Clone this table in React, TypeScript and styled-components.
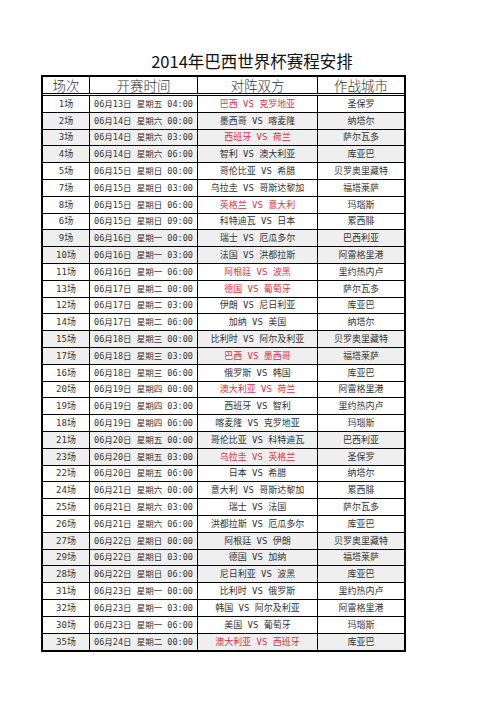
import React from "react";
import styled, { createGlobalStyle } from "styled-components";

const GlobalStyle = createGlobalStyle`
  html, body {
    margin: 0;
    padding: 0;
    background: #ffffff;
  }
  body {
    font-family: "Noto Sans CJK SC", sans-serif;
  }
`;

interface Match {
  no: string;
  date: string;
  week: string;
  time: string;
  home: string;
  away: string;
  city: string;
  hot?: boolean;
  shade?: boolean;
}

const matches: Match[] = [
  { no: "1场", date: "06月13日", week: "星期五", time: "04:00", home: "巴西", away: "克罗地亚", city: "圣保罗", hot: true },
  { no: "2场", date: "06月14日", week: "星期六", time: "00:00", home: "墨西哥", away: "喀麦隆", city: "纳塔尔", shade: true },
  { no: "3场", date: "06月14日", week: "星期六", time: "03:00", home: "西班牙", away: "荷兰", city: "萨尔瓦多", hot: true, shade: true },
  { no: "4场", date: "06月14日", week: "星期六", time: "06:00", home: "智利", away: "澳大利亚", city: "库亚巴", shade: true },
  { no: "5场", date: "06月15日", week: "星期日", time: "00:00", home: "哥伦比亚", away: "希腊", city: "贝罗奥里藏特" },
  { no: "7场", date: "06月15日", week: "星期日", time: "03:00", home: "乌拉圭", away: "哥斯达黎加", city: "福塔莱萨" },
  { no: "8场", date: "06月15日", week: "星期日", time: "06:00", home: "英格兰", away: "意大利", city: "玛瑙斯", hot: true },
  { no: "6场", date: "06月15日", week: "星期日", time: "09:00", home: "科特迪瓦", away: "日本", city: "累西腓" },
  { no: "9场", date: "06月16日", week: "星期一", time: "00:00", home: "瑞士", away: "厄瓜多尔", city: "巴西利亚", shade: true },
  { no: "10场", date: "06月16日", week: "星期一", time: "03:00", home: "法国", away: "洪都拉斯", city: "阿雷格里港", shade: true },
  { no: "11场", date: "06月16日", week: "星期一", time: "06:00", home: "阿根廷", away: "波黑", city: "里约热内卢", hot: true },
  { no: "13场", date: "06月17日", week: "星期二", time: "00:00", home: "德国", away: "葡萄牙", city: "萨尔瓦多", hot: true },
  { no: "12场", date: "06月17日", week: "星期二", time: "03:00", home: "伊朗", away: "尼日利亚", city: "库亚巴" },
  { no: "14场", date: "06月17日", week: "星期二", time: "06:00", home: "加纳", away: "美国", city: "纳塔尔" },
  { no: "15场", date: "06月18日", week: "星期三", time: "00:00", home: "比利时", away: "阿尔及利亚", city: "贝罗奥里藏特", shade: true },
  { no: "17场", date: "06月18日", week: "星期三", time: "03:00", home: "巴西", away: "墨西哥", city: "福塔莱萨", hot: true, shade: true },
  { no: "16场", date: "06月18日", week: "星期三", time: "06:00", home: "俄罗斯", away: "韩国", city: "库亚巴" },
  { no: "20场", date: "06月19日", week: "星期四", time: "00:00", home: "澳大利亚", away: "荷兰", city: "阿雷格里港", hot: true },
  { no: "19场", date: "06月19日", week: "星期四", time: "03:00", home: "西班牙", away: "智利", city: "里约热内卢" },
  { no: "18场", date: "06月19日", week: "星期四", time: "06:00", home: "喀麦隆", away: "克罗地亚", city: "玛瑙斯" },
  { no: "21场", date: "06月20日", week: "星期五", time: "00:00", home: "哥伦比亚", away: "科特迪瓦", city: "巴西利亚", shade: true },
  { no: "23场", date: "06月20日", week: "星期五", time: "03:00", home: "乌拉圭", away: "英格兰", city: "圣保罗", hot: true, shade: true },
  { no: "22场", date: "06月20日", week: "星期五", time: "06:00", home: "日本", away: "希腊", city: "纳塔尔" },
  { no: "24场", date: "06月21日", week: "星期六", time: "00:00", home: "意大利", away: "哥斯达黎加", city: "累西腓" },
  { no: "25场", date: "06月21日", week: "星期六", time: "03:00", home: "瑞士", away: "法国", city: "萨尔瓦多" },
  { no: "26场", date: "06月21日", week: "星期六", time: "06:00", home: "洪都拉斯", away: "厄瓜多尔", city: "库亚巴" },
  { no: "27场", date: "06月22日", week: "星期日", time: "00:00", home: "阿根廷", away: "伊朗", city: "贝罗奥里藏特", shade: true },
  { no: "29场", date: "06月22日", week: "星期日", time: "03:00", home: "德国", away: "加纳", city: "福塔莱萨", shade: true },
  { no: "28场", date: "06月22日", week: "星期日", time: "06:00", home: "尼日利亚", away: "波黑", city: "库亚巴", shade: true },
  { no: "31场", date: "06月23日", week: "星期一", time: "00:00", home: "比利时", away: "俄罗斯", city: "里约热内卢" },
  { no: "32场", date: "06月23日", week: "星期一", time: "03:00", home: "韩国", away: "阿尔及利亚", city: "阿雷格里港" },
  { no: "30场", date: "06月23日", week: "星期一", time: "06:00", home: "美国", away: "葡萄牙", city: "玛瑙斯" },
  { no: "35场", date: "06月24日", week: "星期二", time: "00:00", home: "澳大利亚", away: "西班牙", city: "库亚巴", hot: true, shade: true },
];

const Page = styled.div`
  padding: 51px 0 0 41px;
`;

const Title = styled.h1`
  margin: 0 0 4px;
  width: 422px;
  height: 20px;
  font-family: "Noto Sans CJK SC", sans-serif;
  font-size: 16.5px;
  line-height: 20px;
  font-weight: normal;
  color: #111;
  text-align: center;
`;

const Sheet = styled.div`
  width: 365px;
  box-sizing: border-box;
  border: 2px solid #000;
  display: flex;
  flex-direction: column;
`;

const columns = "47px 108px 120px 1fr";

const HeadRow = styled.div`
  display: grid;
  grid-template-columns: ${columns};
  height: 19px;
  box-sizing: border-box;
  border-bottom: 3px double #000;
`;

const HeadCell = styled.div`
  display: flex;
  align-items: center;
  justify-content: center;
  border-right: 1px solid #000;
  font-family: "Noto Sans CJK SC", sans-serif;
  font-size: 13.5px;
  font-weight: 300;
  line-height: 16px;
  color: #333;
  &:last-child {
    border-right: none;
  }
`;

const Row = styled.div<{ $shade?: boolean }>`
  display: grid;
  grid-template-columns: ${columns};
  height: 16.8px;
  box-sizing: border-box;
  border-bottom: 1px solid #000;
  background: ${(p) => (p.$shade ? "#efefef" : "#ffffff")};
  &:last-child {
    border-bottom: none;
  }
`;

const Cell = styled.div<{ $hot?: boolean; $small?: boolean }>`
  display: flex;
  align-items: center;
  justify-content: center;
  white-space: pre;
  border-right: 1px solid #000;
  font-family: "DejaVu Sans Mono", "Noto Sans CJK SC", monospace;
  font-size: ${(p) => (p.$small ? "8.5px" : "9px")};
  line-height: 12px;
  color: ${(p) => (p.$hot ? "#e2323e" : "#333")};
  &:last-child {
    border-right: none;
  }
`;

export default function App() {
  return (
    <>
      <GlobalStyle />
      <Page>
        <Title>2014年巴西世界杯赛程安排</Title>
        <Sheet>
          <HeadRow>
            <HeadCell>场次</HeadCell>
            <HeadCell>开赛时间</HeadCell>
            <HeadCell>对阵双方</HeadCell>
            <HeadCell>作战城市</HeadCell>
          </HeadRow>
          {matches.map((m) => (
            <Row key={m.no} $shade={m.shade}>
              <Cell>{m.no}</Cell>
              <Cell $small>{`${m.date} ${m.week} ${m.time}`}</Cell>
              <Cell $hot={m.hot}>{`${m.home} VS ${m.away}`}</Cell>
              <Cell>{m.city}</Cell>
            </Row>
          ))}
        </Sheet>
      </Page>
    </>
  );
}
